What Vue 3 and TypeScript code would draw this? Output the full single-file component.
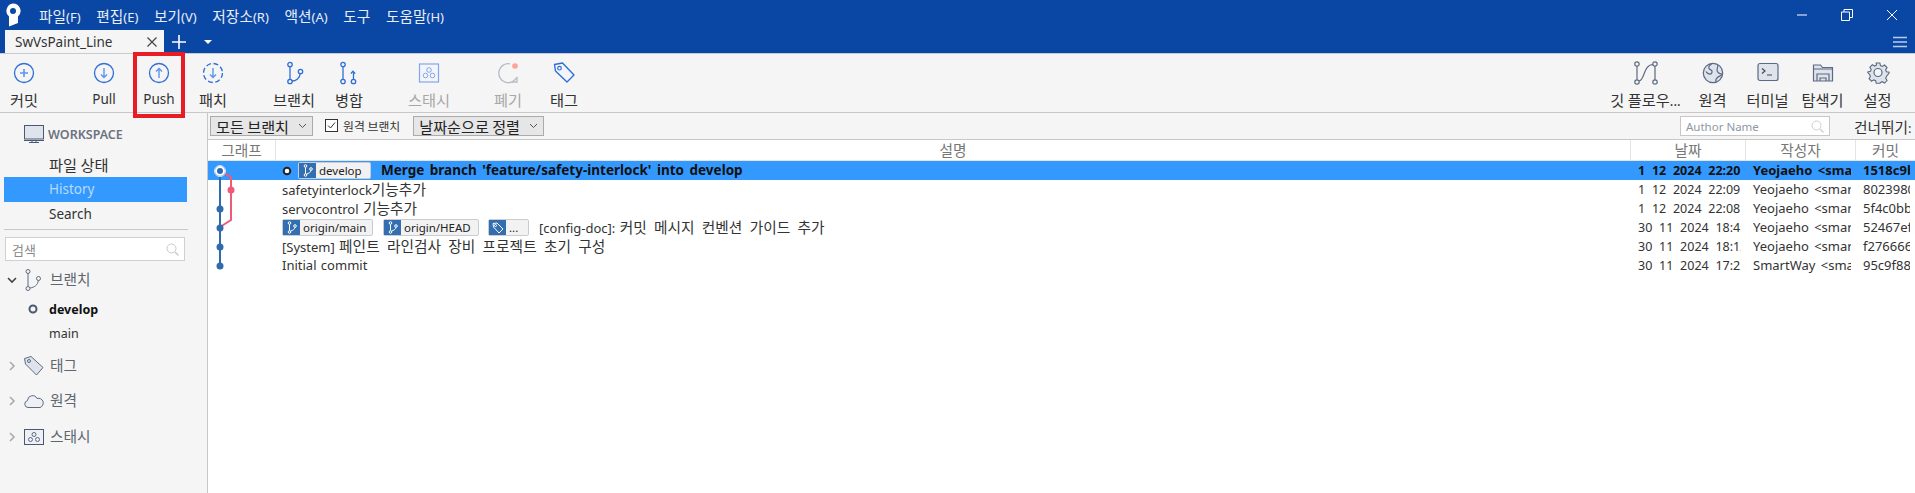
<script setup lang="ts">
import { h, type FunctionalComponent } from 'vue'

interface ToolButton { label: string; icon: string; width: number; ml: number; muted?: boolean }

// Hangul runs are set larger than Latin runs, as in the reference
const T: FunctionalComponent<{ text: string }> = (props) =>
  (props.text.match(/[\uac00-\ud7a3]+(?: +[\uac00-\ud7a3]+)*|[^\uac00-\ud7a3]+/g) ?? []).map((part) =>
    h('span', { class: /[\uac00-\ud7a3]/.test(part) ? 'ko' : undefined }, part),
  )

const blue = 'fill="none" stroke="#2f6fd6" stroke-width="1.3"'
const gray = 'fill="none" stroke="#5c6a82" stroke-width="1.2"'
const leftButtons: ToolButton[] = [
  { label: '커밋', width: 48, ml: 0, icon: `<circle cx="12" cy="12" r="9.5" ${blue}/><path d="M12 8v8M8 12h8" fill="none" stroke="#5d94ee" stroke-width="1.6"/>` },
  { label: 'Pull', width: 48, ml: 32, icon: `<circle cx="12" cy="12" r="9.5" ${blue}/><path d="M12 7v9.5M9 13.5l3 3 3-3" fill="none" stroke="#5d94ee" stroke-width="1.4"/>` },
  { label: 'Push', width: 48, ml: 7, icon: `<circle cx="12" cy="12" r="9.5" ${blue}/><path d="M12 17V7.5M9 10.5l3-3 3 3" fill="none" stroke="#5d94ee" stroke-width="1.4"/>` },
  { label: '패치', width: 48, ml: 6, icon: `<circle cx="12" cy="12" r="9.5" ${blue} stroke-dasharray="5 2.5"/><path d="M12 7v9.5M9 13.5l3 3 3-3" fill="none" stroke="#5d94ee" stroke-width="1.4"/>` },
  { label: '브랜치', width: 48, ml: 33, icon: `<circle cx="8" cy="3.5" r="2.2" ${blue}/><circle cx="8" cy="20.5" r="2.2" ${blue}/><circle cx="18.5" cy="10.5" r="2.2" ${blue}/><path d="M8 5.700v12.600M10 20c4 0 8-3 8.200-7.500" ${blue}/>` },
  { label: '병합', width: 48, ml: 7, icon: `<circle cx="6" cy="3.5" r="2.2" ${blue}/><circle cx="6" cy="20.5" r="2.2" ${blue}/><circle cx="16.5" cy="20.5" r="2.2" ${blue}/><path d="M6 5.700v12.600M16.500 18.300V11M13.800 12.600l2.200-2.400 2.200 2.400" ${blue}/>` },
  { label: '스태시', width: 48, ml: 32, muted: true, icon: `<rect x="2.500" y="3" width="19" height="18" fill="#f2f5fb" stroke="#85a6e4" stroke-width="1.2"/><circle cx="12" cy="9" r="2.300" fill="none" stroke="#85a6e4"/><circle cx="8.500" cy="14.500" r="2.300" fill="none" stroke="#85a6e4"/><circle cx="15.500" cy="14.500" r="2.300" fill="none" stroke="#85a6e4"/>` },
  { label: '폐기', width: 48, ml: 31, muted: true, icon: `<path d="M14 2.800A9.500 9.500 0 1 0 21 16" fill="none" stroke="#b6bcc6" stroke-width="1.3"/><path d="M21 16v5h-5" fill="none" stroke="#b6bcc6" stroke-width="1.3"/><circle cx="19" cy="5" r="2.800" fill="#fba498"/>` },
  { label: '태그', width: 48, ml: 8, icon: `<path d="M2.500 3.500l8-1.500 11.500 12-7 7L3.500 10z" fill="#f2f5fb" stroke="#2f6fd6" stroke-width="1.4" stroke-linejoin="round"/><circle cx="7.500" cy="7.200" r="1.800" fill="none" stroke="#2f6fd6" stroke-width="1.2"/>` },
]
const rightButtons: ToolButton[] = [
  { label: '깃 플로우...', width: 76, ml: 0, icon: `<circle cx="3" cy="3" r="2.200" ${gray}/><circle cx="3" cy="21" r="2.200" ${gray}/><circle cx="21" cy="3" r="2.200" ${gray}/><circle cx="21" cy="21" r="2.200" ${gray}/><path d="M3 5.200v13.600M21 5.200v13.600M5 20c6-1 4-16 14-16.500" ${gray}/>` },
  { label: '원격', width: 55, ml: 1.5, icon: `<circle cx="12" cy="12" r="9.700" fill="#dfe3ec" stroke="#5c6a82" stroke-width="1.2"/><path d="M11 2.500c-3 2-4 3-3 5s4 1 3 4-5 1-6-1M15 21c-1-3 1-4 2-5s4-1 4-3c-3 0-5-2-5-4l1-5" fill="none" stroke="#5c6a82" stroke-width="1.2"/>` },
  { label: '터미널', width: 55, ml: 0, icon: `<rect x="2" y="2.500" width="20" height="17" rx="2" fill="#dfe3ec" stroke="#5c6a82" stroke-width="1.2"/><path d="M6 7.500l3 2.500-3 2.500M11 14h5" fill="none" stroke="#3d4a63" stroke-width="1.2"/>` },
  { label: '탐색기', width: 55, ml: 0, icon: `<path d="M2.500 4h7l2 2.500h10V20h-19z" fill="#dfe3ec" stroke="#5c6a82" stroke-width="1.2"/><path d="M6 20v-7h12v7M9 20v-3h6v3M2.500 8h19" fill="none" stroke="#5c6a82" stroke-width="1.2"/>` },
  { label: '설정', width: 55, ml: 0, icon: `<path d="M10 2h4l.6 2.800 2 .9 2.500-1.500 2.700 2.800-1.500 2.400.8 2 2.900.6v.8l-2.900 3.800-.8 2 1.500 2.400-2.700 2.800-2.500-1.500-2 .9L14 24h-4l-.6-2.800-2-.9-2.500 1.500-2.700-2.800 1.500-2.400-.8-2L.9 12.400v-.8l2.900-.6.8-2-1.500-2.400 2.700-2.800 2.500 1.500 2-.9z" transform="translate(1 .2) scale(.92)" fill="#dfe3ec" stroke="#5c6a82" stroke-width="1.2"/><circle cx="12" cy="11.500" r="4" fill="#f5f5f5" stroke="#5c6a82" stroke-width="1.2"/>` },
]
const menus = ['파일(F)', '편집(E)', '보기(V)', '저장소(R)', '액션(A)', '도구', '도움말(H)']
const rows = [
  { date: '1 12 2024 22:20', author: 'Yeojaeho <smartway@naver.com>', hash: '1518c9b', text: "Merge branch 'feature/safety-interlock' into develop", kind: 'head' },
  { date: '1 12 2024 22:09', author: 'Yeojaeho <smartway@naver.com>', hash: '8023980', text: 'safetyinterlock기능추가', kind: 'plain' },
  { date: '1 12 2024 22:08', author: 'Yeojaeho <smartway@naver.com>', hash: '5f4c0bb', text: 'servocontrol 기능추가', kind: 'plain' },
  { date: '30 11 2024 18:45', author: 'Yeojaeho <smartway@naver.com>', hash: '52467ef', text: '[config-doc]: 커밋 메시지 컨벤션 가이드 추가', kind: 'origin' },
  { date: '30 11 2024 18:12', author: 'Yeojaeho <smartway@naver.com>', hash: 'f276666', text: '[System] 페인트 라인검사 장비 프로젝트 초기 구성', kind: 'plain' },
  { date: '30 11 2024 17:25', author: 'SmartWay <smartway@naver.com>', hash: '95c9f88', text: 'Initial commit', kind: 'plain' },
]
</script>

<template>
  <div class="app">
    <header class="titlebar">
      <svg class="logo" width="16" height="24" viewBox="0 0 16 24">
        <path d="M8 .5a7.500 7.500 0 0 1 5 13.100V20l-9 3.500v-9.900A7.500 7.500 0 0 1 8 .5z" fill="#fff" />
        <circle cx="8" cy="8" r="3" fill="#0a47a5" />
      </svg>
      <nav class="menu"><span v-for="m in menus" :key="m"><T :text="m" /></span></nav>
      <div class="winbtns">
        <svg width="12" height="12" viewBox="0 0 12 12"><path d="M1 6h10" stroke="#fff" fill="none" /></svg>
        <svg width="12" height="12" viewBox="0 0 12 12"><path d="M.5 3h8v8.500h-8zM3 3V.5h8.500v8H9" stroke="#fff" fill="none" /></svg>
        <svg width="12" height="12" viewBox="0 0 12 12"><path d="M1 1l10 10M11 1L1 11" stroke="#fff" fill="none" /></svg>
      </div>
    </header>
    <div class="tabbar">
      <div class="tab">
        <span>SwVsPaint_Line</span>
        <svg width="10" height="10" viewBox="0 0 10 10"><path d="M.5.5l9 9M9.500.5l-9 9" stroke="#444" stroke-width="1.2" fill="none" /></svg>
      </div>
      <svg class="plus" width="14" height="14" viewBox="0 0 14 14"><path d="M7 0v14M0 7h14" stroke="#fff" stroke-width="1.6" fill="none" /></svg>
      <svg class="caret" width="8" height="4" viewBox="0 0 8 4"><path d="M0 0h8L4 4z" fill="#fff" /></svg>
      <svg class="burger" width="14" height="12" viewBox="0 0 14 12"><path d="M0 1.500h14M0 6h14M0 10.500h14" stroke="#b9cde9" stroke-width="1.4" fill="none" /></svg>
    </div>
    <div class="toolbar">
      <div class="tgroup">
        <div v-for="b in leftButtons" :key="b.label" class="tbtn" :class="{ muted: b.muted }" :style="{ width: b.width + 'px', marginLeft: b.ml + 'px' }">
          <svg width="24" height="24" viewBox="0 0 24 24" v-html="b.icon"></svg>
          <span><T :text="b.label" /></span>
        </div>
      </div>
      <div class="tgroup right">
        <div v-for="b in rightButtons" :key="b.label" class="tbtn" :style="{ width: b.width + 'px', marginLeft: b.ml + 'px' }">
          <svg width="24" height="24" viewBox="0 0 24 24" v-html="b.icon"></svg>
          <span><T :text="b.label" /></span>
        </div>
      </div>
    </div>
    <div class="pushmark"></div>
    <div class="body">
      <aside class="sidebar">
        <div class="ws">
          <svg width="20" height="18" viewBox="0 0 20 18"><rect x=".5" y=".5" width="19" height="13.500" fill="#dfe3ec" stroke="#4a5873" /><path d="M0 15.500h20M5 17.500h10M8 15v2M12 15v2" stroke="#4a5873" fill="none" /></svg>
          <span>WORKSPACE</span>
        </div>
        <div class="navitem top"><T text="파일 상태" /></div>
        <div class="navitem active">History</div>
        <div class="navitem">Search</div>
        <div class="sdiv"></div>
        <div class="sidesearch">
          <T text="검색" />
          <svg width="13" height="13" viewBox="0 0 13 13"><circle cx="5.500" cy="5.500" r="4.500" fill="none" stroke="#c9c9c9" /><path d="M9 9l3.500 3.500" stroke="#c9c9c9" stroke-width="1.400" /></svg>
        </div>
        <div class="group first">
          <svg class="chev" width="10" height="10" viewBox="0 0 10 10"><path d="M1 3l4 4 4-4" fill="none" stroke="#444" stroke-width="1.600" /></svg>
          <svg width="20" height="22" viewBox="0 0 20 22"><circle cx="4" cy="2.500" r="2" fill="none" stroke="#5c6a82" /><circle cx="4" cy="19.500" r="2" fill="none" stroke="#5c6a82" /><circle cx="14.500" cy="9.500" r="2" fill="none" stroke="#5c6a82" /><path d="M4 4.500v13M6 19c4-.5 8-3 8.300-7.500" fill="none" stroke="#5c6a82" /></svg>
          <span><T text="브랜치" /></span>
        </div>
        <div class="branch current">
          <svg width="10" height="10" viewBox="0 0 10 10"><circle cx="5" cy="5" r="3.500" fill="none" stroke="#4a5873" stroke-width="2" /></svg>
          <span>develop</span>
        </div>
        <div class="branch"><span>main</span></div>
        <div class="group closed-first">
          <svg class="chev" width="10" height="10" viewBox="0 0 10 10"><path d="M3 1l4 4-4 4" fill="none" stroke="#aaa" stroke-width="1.600" /></svg>
          <svg width="20" height="20" viewBox="0 0 20 20"><path d="M.5 2.500L7 .5l12 11-6.500 7.500L1.500 8z" fill="#dfe3ec" stroke="#5c6a82" /><circle cx="5" cy="5" r="1.500" fill="none" stroke="#5c6a82" /></svg>
          <span><T text="태그" /></span>
        </div>
        <div class="group">
          <svg class="chev" width="10" height="10" viewBox="0 0 10 10"><path d="M3 1l4 4-4 4" fill="none" stroke="#aaa" stroke-width="1.600" /></svg>
          <svg width="20" height="14" viewBox="0 0 20 14"><path d="M4 13.500a3.500 3.500 0 0 1-.5-6.900A5 5 0 0 1 13 4.500a4.500 4.500 0 1 1 3 9z" fill="#eef0f5" stroke="#5c6a82" /></svg>
          <span><T text="원격" /></span>
        </div>
        <div class="group">
          <svg class="chev" width="10" height="10" viewBox="0 0 10 10"><path d="M3 1l4 4-4 4" fill="none" stroke="#aaa" stroke-width="1.600" /></svg>
          <svg width="20" height="16" viewBox="0 0 20 16"><rect x=".5" y=".5" width="19" height="15" fill="#eef0f5" stroke="#4a5873" /><circle cx="10" cy="5.500" r="2" fill="none" stroke="#5c6a82" /><circle cx="6.500" cy="10.500" r="2" fill="none" stroke="#5c6a82" /><circle cx="13.500" cy="10.500" r="2" fill="none" stroke="#5c6a82" /></svg>
          <span><T text="스태시" /></span>
        </div>
      </aside>
      <main class="main">
        <div class="filters">
          <div class="combo c1"><span><T text="모든 브랜치" /></span><svg width="9" height="6" viewBox="0 0 9 6"><path d="M1 1l3.500 3.500L8 1" fill="none" stroke="#555" /></svg></div>
          <label class="check">
            <svg width="13" height="13" viewBox="0 0 13 13"><rect x=".5" y=".5" width="12" height="12" fill="#fff" stroke="#333" /><path d="M3 6.500l2.500 2.500L10 3.500" fill="none" stroke="#333" /></svg>
            <span><T text="원격 브랜치" /></span>
          </label>
          <div class="combo c2"><span><T text="날짜순으로 정렬" /></span><svg width="9" height="6" viewBox="0 0 9 6"><path d="M1 1l3.500 3.500L8 1" fill="none" stroke="#555" /></svg></div>
          <div class="author">
            <span>Author Name</span>
            <svg width="13" height="13" viewBox="0 0 13 13"><circle cx="5.500" cy="5.500" r="4.500" fill="none" stroke="#d0d0d0" /><path d="M9 9l3.500 3.500" stroke="#d0d0d0" stroke-width="1.400" /></svg>
          </div>
          <span class="skip"><T text="건너뛰기:" /></span>
        </div>
        <div class="thead">
          <div class="th graph"><T text="그래프" /></div>
          <div class="th desc"><T text="설명" /></div>
          <div class="th date"><T text="날짜" /></div>
          <div class="th who"><T text="작성자" /></div>
          <div class="th hash"><T text="커밋" /></div>
        </div>
        <div class="tbody">
          <svg class="graphsvg" width="40" height="120" viewBox="0 0 40 120">
            <path d="M12 10v95" stroke="#2f6bad" stroke-width="2" fill="none" />
            <path d="M12 10l11 6v43l-11 7" stroke="#ef5a78" stroke-width="2" fill="none" />
            <circle cx="23" cy="29" r="3.500" fill="#ef5a78" />
            <circle cx="12" cy="48" r="3.500" fill="#2f6bad" />
            <circle cx="12" cy="67" r="3.500" fill="#2f6bad" />
            <circle cx="12" cy="86" r="3.500" fill="#2f6bad" />
            <circle cx="12" cy="105" r="3.500" fill="#2f6bad" />
            <circle cx="12" cy="10" r="4" fill="#2f6bad" stroke="#fff" stroke-width="2" />
            <circle cx="12" cy="10" r="5.500" fill="none" stroke="#cfe5fb" />
          </svg>
          <div v-for="r in rows" :key="r.hash" class="row" :class="{ selected: r.kind === 'head' }">
            <div class="cell graph"></div>
            <div class="cell desc">
              <template v-if="r.kind === 'head'">
                <svg class="headdot" width="10" height="10" viewBox="0 0 10 10"><circle cx="5" cy="5" r="3.300" fill="#fff" stroke="#222" stroke-width="2" /></svg>
                <span class="chip c-develop">
                  <i><svg width="10" height="13" viewBox="0 0 10 13"><circle cx="2.500" cy="2" r="1.300" fill="none" stroke="#fff" /><circle cx="2.500" cy="11" r="1.300" fill="none" stroke="#fff" /><circle cx="8" cy="5" r="1.300" fill="none" stroke="#fff" /><path d="M2.500 3.300v6.400M3.500 10c2.500-.5 4.300-2 4.500-3.800" fill="none" stroke="#fff" /></svg></i>develop
                </span>
              </template>
              <template v-if="r.kind === 'origin'">
                <span class="chip c-main">
                  <i><svg width="10" height="13" viewBox="0 0 10 13"><circle cx="2.500" cy="2" r="1.300" fill="none" stroke="#fff" /><circle cx="2.500" cy="11" r="1.300" fill="none" stroke="#fff" /><circle cx="8" cy="5" r="1.300" fill="none" stroke="#fff" /><path d="M2.500 3.300v6.400M3.500 10c2.500-.5 4.300-2 4.500-3.800" fill="none" stroke="#fff" /></svg></i>origin/main
                </span>
                <span class="chip c-head">
                  <i><svg width="10" height="13" viewBox="0 0 10 13"><circle cx="2.500" cy="2" r="1.300" fill="none" stroke="#fff" /><circle cx="2.500" cy="11" r="1.300" fill="none" stroke="#fff" /><circle cx="8" cy="5" r="1.300" fill="none" stroke="#fff" /><path d="M2.500 3.300v6.400M3.500 10c2.500-.5 4.300-2 4.500-3.800" fill="none" stroke="#fff" /></svg></i>origin/HEAD
                </span>
                <span class="chip c-tag">
                  <i><svg width="12" height="12" viewBox="0 0 12 12"><path d="M1 1.500L5 1l6 6-4 4-5.500-6z" fill="none" stroke="#fff" /><circle cx="3.500" cy="3.500" r="1" fill="none" stroke="#fff" /></svg></i>...
                </span>
              </template>
              <span class="msg"><T :text="r.text" /></span>
            </div>
            <div class="cell date">{{ r.date }}</div>
            <div class="cell who">{{ r.author }}</div>
            <div class="cell hash">{{ r.hash }}</div>
          </div>
        </div>
      </main>
    </div>
  </div>
</template>

<style scoped>
.app { width: 1915px; height: 493px; overflow: hidden; position: relative; display: flex; flex-direction: column; background: #fff; font-family: "Noto Sans", "Noto Sans CJK KR", sans-serif; color: #333; }
svg { display: block; flex: none; }
.titlebar { height: 30px; background: #0a47a5; display: flex; align-items: center; padding-left: 5px; color: #fff; }
.menu { display: flex; gap: 15.700px; margin-left: 18px; font-size: 13px; color: #e8eef8; }
.winbtns { margin-left: auto; display: flex; gap: 33px; padding-right: 17px; }
.tabbar { height: 23px; background: #0a47a5; display: flex; align-items: center; padding-left: 5px; }
.tab { width: 159px; height: 23px; background: #f5f5f5; display: flex; align-items: center; justify-content: space-between; padding: 0 7px 0 10px; box-sizing: border-box; font-size: 13.500px; color: #333; }
.plus { margin-left: 8px; }
.caret { margin-left: 18px; }
.burger { margin-left: auto; margin-right: 8px; }
.toolbar { height: 60px; background: #f5f5f5; border-top: 1px solid #c8ccd2; border-bottom: 1px solid #c8c8c8; box-sizing: border-box; display: flex; justify-content: space-between; padding-right: 10px; flex: none; }
.tgroup { display: flex; }
.tbtn { display: flex; flex-direction: column; align-items: center; padding-top: 7px; font-size: 13.500px; color: #333; white-space: nowrap; box-sizing: border-box; }
.tbtn > span { margin-top: 5px; line-height: 18px; }
.tbtn.muted { color: #a8a8a8; }
.pushmark { position: absolute; left: 133px; top: 52px; width: 52px; height: 66px; border: 4px solid #e81c24; box-sizing: border-box; }
.body { flex: 1; display: flex; min-height: 0; }
.sidebar { width: 208px; background: #f5f5f5; border-right: 1px solid #c8c8c8; box-sizing: border-box; flex: none; }
.ws { display: flex; align-items: center; gap: 4px; padding: 13px 0 0 24px; height: 29px; box-sizing: border-box; font-size: 12.500px; font-weight: 600; color: #6c7380; }
.navitem { height: 25px; margin: 0 20px 0 4px; padding-left: 45px; font-size: 13.500px; line-height: 25px; color: #333; }
.navitem.top { margin-top: 10px; }
.navitem.active { background: #3399ff; color: #b8dafb; }
.sdiv { height: 1px; background: #c8c8c8; margin: 2px 19px 7px 4px; }
.sidesearch { width: 180px; height: 24px; margin-left: 5px; box-sizing: border-box; background: #fff; border: 1px solid #d0d0d0; display: flex; align-items: center; justify-content: space-between; padding: 0 5px 0 6px; font-size: 11.500px; color: #8a8a8a; }
.group { display: flex; align-items: center; height: 35.500px; font-size: 13px; color: #5f6670; padding-left: 7px; gap: 5px; }
.group.first { margin-top: 7px; height: 24px; }
.group.closed-first { margin-top: 3px; }
.group > span { margin-left: 1px; margin-top: -3px; }
.chev { margin-right: 2px; }
.branch { height: 24px; padding-left: 28px; display: flex; align-items: center; gap: 11px; font-size: 12.500px; color: #333; }
.branch:not(.current) { padding-left: 49px; }
.branch.current { font-weight: 700; color: #111; margin-top: 5px; }
.main { flex: 1; min-width: 0; display: flex; flex-direction: column; }
.filters { height: 27px; background: #f5f5f5; border-bottom: 1px solid #c8c8c8; box-sizing: border-box; display: flex; align-items: center; padding-left: 2px; }
.combo { height: 20px; background: #e6e6e6; border: 1px solid #ababab; box-sizing: border-box; display: flex; align-items: center; justify-content: space-between; padding: 0 5px; font-size: 13.400px; color: #222; white-space: nowrap; }
.c1 { width: 103px; }
.c2 { width: 131px; margin-left: 13px; }
.check { display: flex; align-items: center; gap: 5px; font-size: 10.500px; color: #333; margin-left: 12px; margin-top: -2px; white-space: nowrap; }
.author { width: 150px; height: 20px; margin-left: auto; background: #fff; border: 1px solid #c8c8c8; box-sizing: border-box; display: flex; align-items: center; justify-content: space-between; padding: 0 5px 0 5px; font-size: 11.500px; color: #8f97a3; }
.skip { margin-left: 24px; width: 61px; font-size: 13px; white-space: nowrap; overflow: hidden; color: #333; }
.thead, .row { display: flex; }
.thead { height: 21px; border-bottom: 1px solid #e4e4e4; box-sizing: border-box; }
.th { font-size: 13px; color: #777; text-align: center; line-height: 19px; border-right: 1px solid #e4e4e4; box-sizing: border-box; }
.graph { width: 68px; flex: none; }
.desc { flex: 1; min-width: 0; }
.date { width: 115px; flex: none; }
.who { width: 110px; flex: none; }
.hash { width: 59px; flex: none; border-right: 0; }
.tbody { position: relative; }
.graphsvg { position: absolute; left: 0; top: 0; z-index: 2; }
.row { height: 19px; font-size: 13px; line-height: 19px; color: #333; word-spacing: 1px; }
.row.selected { background: #3399ff; color: #111; font-weight: 700; }
.selected .msg { font-size: 13.500px; word-spacing: 2px; }
.cell { white-space: nowrap; overflow: hidden; }
.cell.desc { display: flex; align-items: center; padding-left: 6px; }
.cell.date { width: 110px; margin-right: 5px; padding-left: 7px; box-sizing: border-box; font-size: 12.500px; word-spacing: 3.500px; }
.cell.who { width: 105px; margin-right: 5px; padding-left: 7px; box-sizing: border-box; word-spacing: 2px; }
.cell.hash { width: 54px; margin-right: 5px; padding-left: 7px; box-sizing: border-box; }
.headdot { margin-left: 0; margin-right: 6px; }
.chip { height: 17px; background: #f2f2f2; border: 1px solid #c9cdd3; border-radius: 2px; box-sizing: border-box; display: flex; align-items: center; font-size: 11.500px; font-weight: 400; color: #222; flex: none; word-spacing: 0; }
.chip i { width: 17px; height: 15px; background: #336fb0; display: flex; align-items: center; justify-content: center; margin-right: 3px; flex: none; }
.c-develop { width: 73px; margin-right: 10px; }
.c-main { width: 91px; margin-right: 10px; }
.c-head { width: 96px; margin-right: 9px; }
.c-tag { width: 41px; margin-right: 10px; }
</style>

<style>
html, body { margin: 0; background: #fff; }
.ko { font-size: 1.13em; font-family: "Noto Sans CJK KR", sans-serif; }
.msg .ko { word-spacing: 4px; }
</style>
